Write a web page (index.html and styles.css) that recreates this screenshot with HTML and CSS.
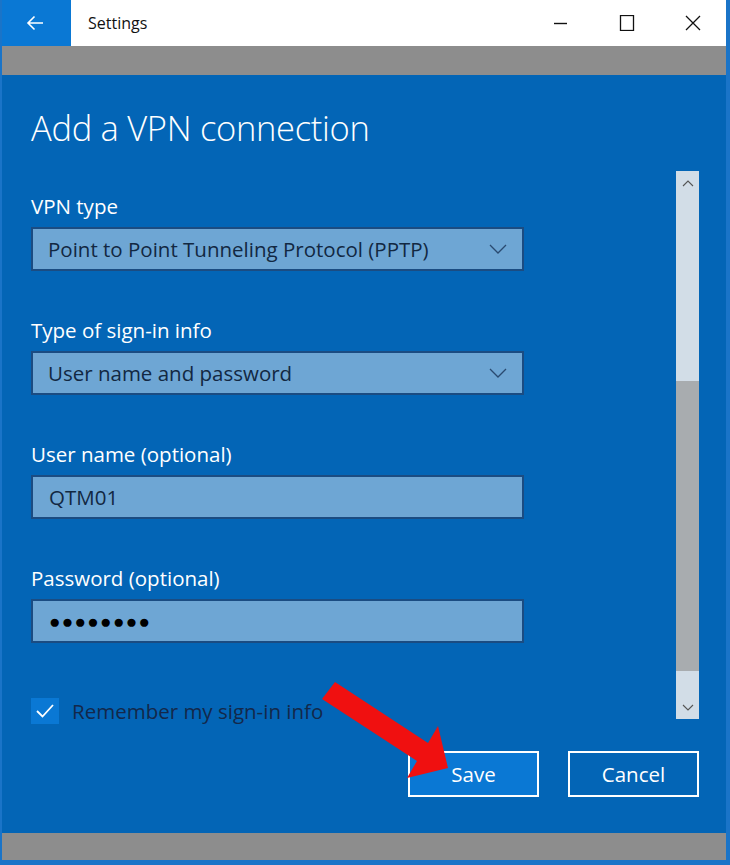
FILE: index.html
```html
<!DOCTYPE html>
<html>
  <head>
    <meta name="viewport" content="width=device-width,initial-scale=1.0">
    <title>Settings</title>
    <link rel="stylesheet" href="styles.css">
  </head>
  <body>
    <div class="window">
      <div class="titlebar">
        <div class="back">
          <svg width="18" height="16" viewBox="0 0 18 16"><path d="M17 8H2M8.5 1.5L2 8l6.5 6.5" fill="none" stroke="#fff" stroke-width="1.6"/></svg>
        </div>
        <div class="title-area">
          <span class="title">Settings</span>
          <div class="controls">
            <span class="ctl"><svg width="16" height="16" viewBox="0 0 16 16"><path d="M1 8.5h13" stroke="#111" stroke-width="1.4"/></svg></span>
            <span class="ctl"><svg width="16" height="16" viewBox="0 0 16 16"><rect x="1.5" y="0.5" width="13" height="15" fill="none" stroke="#111" stroke-width="1.3"/></svg></span>
            <span class="ctl"><svg width="16" height="16" viewBox="0 0 16 16"><path d="M1 1l14 14M15 1L1 15" stroke="#111" stroke-width="1.3"/></svg></span>
          </div>
        </div>
      </div>
      <div class="gap"></div>

      <div class="content">
        <h1 class="heading">Add a VPN connection</h1>

        <div class="body">
          <div class="form">
            <div class="field">
              <label class="label">VPN type</label>
              <div class="box select">
                <span>Point to Point Tunneling Protocol (PPTP)</span>
                <svg width="18" height="10" viewBox="0 0 18 10"><path d="M1 1l8 8 8-8" fill="none" stroke="#2a4a70" stroke-width="1.3"/></svg>
              </div>
            </div>
            <div class="field">
              <label class="label">Type of sign-in info</label>
              <div class="box select">
                <span>User name and password</span>
                <svg width="18" height="10" viewBox="0 0 18 10"><path d="M1 1l8 8 8-8" fill="none" stroke="#2a4a70" stroke-width="1.3"/></svg>
              </div>
            </div>
            <div class="field">
              <label class="label">User name (optional)</label>
              <div class="box input">QTM01</div>
            </div>
            <div class="field">
              <label class="label">Password (optional)</label>
              <div class="box input dots">●●●●●●●●</div>
            </div>
            <div class="remember">
              <span class="check">
                <svg width="20" height="16" viewBox="0 0 20 16"><path d="M2 8l5.5 5.5L18 2" fill="none" stroke="#fff" stroke-width="1.8"/></svg>
              </span>
              <span class="remember-text">Remember my sign-in info</span>
            </div>
          </div>

          <div class="scrollbar">
            <div class="sb-btn"><svg width="12" height="7" viewBox="0 0 12 7"><path d="M1 6l5-5 5 5" fill="none" stroke="#555" stroke-width="1.1"/></svg></div>
            <div class="sb-track">
              <div class="sb-space"></div>
              <div class="sb-thumb"></div>
              <div class="sb-end"></div>
            </div>
            <div class="sb-btn"><svg width="12" height="7" viewBox="0 0 12 7"><path d="M1 1l5 5 5-5" fill="none" stroke="#555" stroke-width="1.1"/></svg></div>
          </div>
        </div>

        <div class="footer">
          <button class="btn primary">Save</button>
          <button class="btn">Cancel</button>
        </div>

        <svg class="arrow" width="730" height="865" viewBox="0 0 730 865">
          <polygon points="335,682 428,743 438,726 448,768 407,778 417,761 322,699" fill="#f01010"/>
        </svg>
      </div>
      <div class="gap bottom"></div>
    </div>
  </body>
</html>
```

FILE: styles.css
```css
* { box-sizing: border-box; }
body { margin: 0; background: #1672c6; font-family: "Open Sans", "Noto Sans", sans-serif; }

.window { width: 730px; height: 865px; border-left: 2px solid #1a74c8; border-right: 4px solid #1a74c8; border-bottom: 5px solid #1a74c8; display: flex; flex-direction: column; }

.titlebar { height: 46px; display: flex; }
.back { width: 69px; background: #0a78d4; display: flex; align-items: center; justify-content: center; padding-right: 4px; }
.title-area { flex: 1; background: #fff; display: flex; align-items: center; padding-left: 17px; }
.title { font-size: 16px; color: #111; }
.controls { margin-left: auto; display: flex; }
.ctl { width: 66px; display: flex; justify-content: center; }

.gap { height: 29px; background: #8d8d8d; }
.gap.bottom { height: 27px; }

.content { position: relative; flex: 1; background: #0365b6; padding: 0 27px 0 29px; display: flex; flex-direction: column; }
.heading { margin: 0; padding-top: 31px; font-size: 34.5px; font-weight: 300; line-height: 44px; color: #fff; letter-spacing: -0.3px; }

.body { display: flex; margin-top: 21px; height: 548px; }
.form { flex: 1; padding-top: 22px; }
.field { width: 493px; margin-bottom: 46px; }
.label { display: block; color: #fff; font-size: 20.5px; line-height: 26px; margin-bottom: 8px; }
.box { height: 44px; background: #6ea6d4; border: 2px solid #1b4c82; color: #122842; font-size: 20.5px; display: flex; align-items: center; padding: 0 15px 0 15px; }
.select { justify-content: space-between; }
.input { padding-left: 16px; }
.dots { font-size: 19px; letter-spacing: 1.3px; color: #000; }

/* margin collapses with the field above, so this is the full gap */
.remember { display: flex; align-items: center; margin-top: 54px; }
.check { width: 28px; height: 26px; background: #0a78d4; display: flex; align-items: center; justify-content: center; }
.remember-text { margin-left: 13px; font-size: 20.5px; color: #13284a; }

.scrollbar { width: 23px; display: flex; flex-direction: column; background: #d2dde7; }
.sb-btn { height: 24px; display: flex; align-items: center; justify-content: center; }
.sb-track { flex: 1; display: flex; flex-direction: column; }
.sb-space { height: 186px; }
.sb-thumb { height: 290px; background: #a8acaf; }
.sb-end { flex: 1; }

.footer { display: flex; justify-content: flex-end; gap: 29px; margin-top: 32px; }
.btn { width: 131px; height: 46px; border: 2px solid #fff; background: #0365b6; color: #fff; font-family: "Open Sans", "Noto Sans", sans-serif; font-size: 20.5px; }
.btn.primary { background: #0a78d4; }

.arrow { position: absolute; left: -2px; top: -75px; pointer-events: none; }
```
